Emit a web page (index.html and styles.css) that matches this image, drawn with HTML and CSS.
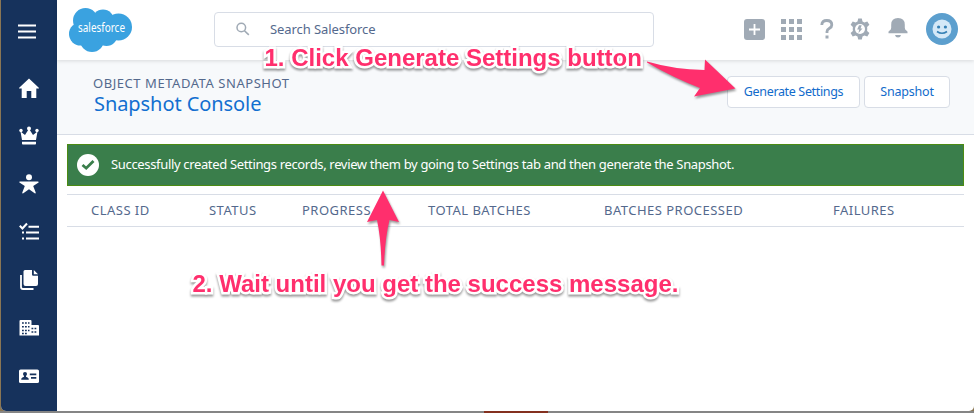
FILE: index.html
```html
<!DOCTYPE html>
<html lang="en">
<head>
<meta charset="utf-8">
<title>Snapshot Console</title>
<link rel="stylesheet" href="styles.css">
</head>
<body>
<div class="window">
  <nav class="sidebar">
    <svg class="nav-icon menu" viewBox="0 0 20 20"><path d="M1 4.500h18M1 10.500h18M1 16.500h18" stroke="currentColor" stroke-width="2.200"/></svg>
    <svg class="nav-icon" viewBox="0 0 20 20"><path d="M10 .5 19.8 9.8q.5.7-.4.7H17.3V20H12.3V13h-4.6v7H2.700V10.500H.6q-.9 0-.4-.7z" fill="currentColor"/></svg>
    <svg class="nav-icon" viewBox="0 0 20 20"><g fill="currentColor"><circle cx="2" cy="4.500" r="1.700"/><circle cx="10" cy="2.500" r="2"/><circle cx="18" cy="4.500" r="1.700"/><path d="M1.500 5.500 6 9l3.200-5h1.600L14 9l4.500-3.500L17 14H3zM3 15.700h14v2.100q0 .7-.8.7H3.800q-.8 0-.8-.7z"/></g></svg>
    <svg class="nav-icon" viewBox="0 0 20 20"><g fill="currentColor"><circle cx="10" cy="3.200" r="3"/><path d="M.8 7.500h18.400q1 .8 0 1.300l-5 3.200 2.500 6.500q.1 1.400-1 .8L10 15.200l-5.700 4.100q-1.200.6-1-.8L5.800 12l-5-3.200q-1-.7 0-1.300z"/></g></svg>
    <svg class="nav-icon" viewBox="0 0 20 20"><path d="m.8 3.800 2.600 2.600L8 1.500M9.500 4.700H20M3 10.500h2M7 10.500h13M3 16.500h2M7 16.500h13" fill="none" stroke="currentColor" stroke-width="2.100"/></svg>
    <svg class="nav-icon" viewBox="0 0 20 20"><path d="M2 5v12q0 2 2 2h10.500" fill="none" stroke="currentColor" stroke-width="1.800"/><path d="M6 0h7v4.500q0 1.200 1.200 1.200H19V14q0 2-2 2H6.500q-2 0-2-2V1.500Q4.500 0 6 0zM14.800 0 19 4.300h-4.200z" fill="currentColor"/></svg>
    <svg class="nav-icon" viewBox="0 0 20 20"><path d="M1.500 2h10q1 0 1 1v4H19q1 0 1 1v9.500H.5V3q0-1 1-1z" fill="currentColor"/><path d="M3 5h7.500M3 8.700h7.500M3 12.400h7.500M3 15.500h5M12.500 10.500h6M12.500 14h6" stroke="#16325c" stroke-width="1.500" stroke-dasharray="1.800 1.200"/></svg>
    <svg class="nav-icon" viewBox="0 0 20 20"><rect y="3.500" width="20" height="13.500" rx="1.600" fill="currentColor"/><g fill="#16325c"><circle cx="6" cy="8" r="2"/><path d="M5 9h2v1.700l2 1q.8.500.8 2H2.200q0-1.500.8-2l2-1zM10.800 7.500h6.500v1.800h-6.500zM12 11h5.300v1.800H12z"/></g></svg>
  </nav>
  <main class="main">
    <header class="topbar">
      <svg class="cloud" viewBox="0 0 63 44"><g fill="#3aa2e0"><circle cx="16.500" cy="12.500" r="12.500"/><circle cx="34" cy="12.500" r="11"/><circle cx="49.500" cy="19" r="13.500"/><circle cx="11.500" cy="26" r="11.500"/><circle cx="23" cy="32" r="12"/><circle cx="37.500" cy="27" r="11"/><path d="M12 13h35v17H12z"/></g><text class="cloud-text" x="32.500" y="23.500" text-anchor="middle" textLength="47" lengthAdjust="spacingAndGlyphs">salesforce</text></svg>
      <div class="search">
        <svg class="search-icon" viewBox="0 0 14 14"><circle cx="5.300" cy="5.500" r="4.300" fill="none" stroke="currentColor" stroke-width="1.500"/><path d="m8.500 8.700 4.300 4.200" stroke="currentColor" stroke-width="1.600"/></svg>
        <span class="search-text">Search Salesforce</span>
      </div>
      <div class="tools">
        <svg width="21" height="21" viewBox="0 0 21 21"><rect width="21" height="21" rx="3" fill="currentColor"/><path d="M10.500 5v11M5 10.500h11" stroke="#fff" stroke-width="1.800"/></svg>
        <svg class="tool-grid" width="21" height="21" viewBox="0 0 21 21"><path d="M0 2.500h21M0 10.500h21M0 18.500h21" stroke="currentColor" stroke-width="5" stroke-dasharray="5 3"/></svg>
        <svg class="tool-help" width="14" height="20" viewBox="0 0 14 20"><path d="M1.800 6Q1.800 1.500 6.800 1.500t5 4.500Q11.800 8 9.500 9.300 7 10.700 7 12.500V14" fill="none" stroke="currentColor" stroke-width="2.800"/><path d="M5.500 16.500h3v3h-3z" fill="currentColor"/></svg>
        <svg class="tool-gear" width="20" height="22" viewBox="0 0 20 22"><path d="M8.200.5h3.600l.7 3q1 .3 1.900 1l2.900-1 2.100 3.200-2.300 2.200q.3 1.100 0 4.200l2.300 2-2.100 3.400-2.900-1q-1 .7-1.900 1l-.7 3H8.200l-.7-3q-1-.3-1.900-1l-2.900 1-2.100-3.400 2.300-2q-.3-2 0-4.200L.6 6.700l2.100-3.200 2.900 1q.9-.7 1.900-1z" fill="currentColor"/><circle cx="10" cy="11" r="5" fill="#fff"/><path d="m9 7.200-1.800 4.300h2L8.500 15l4-4.600h-2L11.700 7.200z" fill="currentColor"/></svg>
        <svg class="tool-bell" width="20" height="20" viewBox="0 0 20 20"><path d="M10 0q6.800 0 6.800 6.700v3q0 2 1.800 3 .9.500.9 1.400v1.200H.5v-1.200q0-.9.900-1.400 1.800-1 1.800-3v-3Q3.200 0 10 0zM7 17h6q-.5 2.500-3 2.500T7 17z" fill="currentColor"/></svg>
        <svg class="avatar" width="32" height="32" viewBox="0 0 32 32"><circle cx="16" cy="16" r="16" fill="#5c9fce"/><circle cx="16" cy="16" r="9.500" fill="#d4e8f7"/><circle cx="12.600" cy="14" r="1.600" fill="#3580b5"/><circle cx="19.400" cy="14" r="1.600" fill="#3580b5"/><path d="M11 18.500q5 3.600 10 0" fill="none" stroke="#3580b5" stroke-width="1.600"/></svg>
      </div>
    </header>
    <section class="page-head">
      <div class="titles">
        <p class="eyebrow">OBJECT METADATA SNAPSHOT</p>
        <h1 class="title">Snapshot Console</h1>
      </div>
      <div class="actions">
        <button class="button generate">Generate Settings</button>
        <button class="button snapshot">Snapshot</button>
      </div>
    </section>
    <section class="content">
      <div class="notice">
        <svg class="notice-icon" viewBox="0 0 22 22"><circle cx="11" cy="11" r="11" fill="#fff"/><path d="m5.500 11 3.700 3.200L16.500 7" fill="none" stroke="#3a7e4b" stroke-width="2.800"/></svg>
        <span class="notice-text">Successfully created Settings records, review them by going to Settings tab and then generate the Snapshot.</span>
      </div>
      <div class="table-head">
        <span>CLASS ID</span><span>STATUS</span><span>PROGRESS</span><span>TOTAL BATCHES</span><span>BATCHES PROCESSED</span><span>FAILURES</span>
      </div>
    </section>
  </main>
</div>
<div class="desktop"><span class="desktop-red"></span></div>
<svg class="arrows" viewBox="0 0 974 413"><g fill="#ff2f6d"><path d="M647 61.500Q674 69.500 704.500 70L705 59.500 735.500 88.500 694 96.500 700 88Q674 78 647 62.500z"/><path d="M383 190.500 399 222 389.500 220Q385 238 384 265.500H381.500Q381 238 377 220L367 222z"/></g></svg>
<div class="note note-one">1. Click Generate Settings button</div>
<div class="note note-two">2. Wait until you get the success message.</div>
</body>
</html>
```
FILE: styles.css
```css
* { box-sizing: border-box; }
body {
  margin: 0;
  width: 974px;
  height: 413px;
  overflow: hidden;
  background: #8a7654;
  font-family: "Noto Sans", sans-serif;
  font-size: 13px;
  color: #54698d;
}
.window {
  display: flex;
  height: 411px;
  margin-left: 1px;
  border-radius: 0 0 5px 5px;
  overflow: hidden;
  background: #fff;
}
.sidebar {
  display: flex;
  flex-direction: column;
  align-items: center;
  width: 56px;
  padding-top: 21px;
  background: #16325c;
  color: #fff;
}
.nav-icon { width: 20px; height: 20px; margin-bottom: 28px; flex: none; }
.menu { margin: 0 4px 37px 0; }
.main { flex: 1; min-width: 0; }
.topbar {
  position: relative;
  display: flex;
  align-items: center;
  height: 60px;
  padding: 0 16px 2px 12px;
  box-shadow: 0 1px 4px rgba(0, 0, 0, .13);
  background: #fff;
}
.cloud { width: 63px; height: 44px; margin-top: 1px; }
.cloud-text { font: 12.500px "Noto Sans", sans-serif; fill: #fff; }
.search {
  display: flex;
  align-items: center;
  width: 440px;
  height: 35px;
  margin-left: 82px;
  padding-left: 21px;
  border: 1px solid #d8dde6;
  border-radius: 4px;
}
.search-icon { width: 14px; height: 14px; color: #a0aab5; }
.search-text { margin-left: 20px; letter-spacing: -.08px; }
.tools { display: flex; align-items: center; margin-left: auto; color: #a0aab5; }
.tool-grid { margin-left: 16px; }
.tool-help { margin-left: 18px; }
.tool-gear { margin-left: 16px; }
.tool-bell { margin: -3px 0 0 18px; }
.avatar { margin-left: 18px; }
.page-head {
  display: flex;
  justify-content: space-between;
  height: 75px;
  padding: 15px 24px 0 36px;
  border-bottom: 1px solid #d8dde6;
  background: #f7f9fb;
}
.eyebrow { margin: 0; font-size: 13px; line-height: 16px; letter-spacing: .55px; }
.title { margin: 1px 0 0 1px; font-size: 20px; font-weight: 400; line-height: 23px; letter-spacing: -.07px; color: #126fd0; }
.actions { display: flex; gap: 4px; padding-top: 1px; }
.button {
  height: 32px;
  padding: 0 0 2px;
  border: 1px solid #d8dde6;
  border-radius: 4px;
  background: #fff;
  color: #126bcb;
  font: 12.500px "Noto Sans", sans-serif;
  letter-spacing: -.35px;
}
.generate { width: 133px; }
.snapshot { width: 86px; letter-spacing: -.2px; }
.content { padding: 9px 9px 0 10px; }
.notice {
  display: flex;
  align-items: center;
  height: 42px;
  margin-right: 1px;
  padding-left: 9px;
  border: 1px solid #4b8b13;
  background: #3a7e4b;
  color: #fff;
}
.notice-icon { width: 22px; height: 22px; }
.notice-text { margin: -2px 0 0 12px; letter-spacing: -.34px; white-space: nowrap; }
.table-head {
  display: grid;
  grid-template-columns: 118px 93px 126px 176px 229px 1fr;
  align-items: center;
  height: 33px;
  margin: 8px 1px 0 0;
  padding: 0 0 2px 24px;
  border: solid #d8dde6;
  border-width: 1px 0;
  font-size: 13px;
  letter-spacing: .48px;
  white-space: nowrap;
}
.desktop { height: 2px; padding-left: 484px; background: #858585; }
.desktop-red { display: block; width: 64px; height: 2px; background: #84301f; }
.arrows {
  position: absolute;
  inset: 0;
  width: 974px;
  height: 413px;
  filter: drop-shadow(1px 2px 1px rgba(0, 0, 0, .4));
}
.note {
  position: absolute;
  font: bold 24px/26px "Liberation Sans", sans-serif;
  color: #ff2f6d;
  white-space: nowrap;
  -webkit-text-stroke: 5px #fff;
  paint-order: stroke fill;
  filter: drop-shadow(0 2px 1px rgba(0, 0, 0, .4));
}
.note-one { left: 264.500px; top: 45px; }
.note-two { left: 192.500px; top: 271px; }
```
